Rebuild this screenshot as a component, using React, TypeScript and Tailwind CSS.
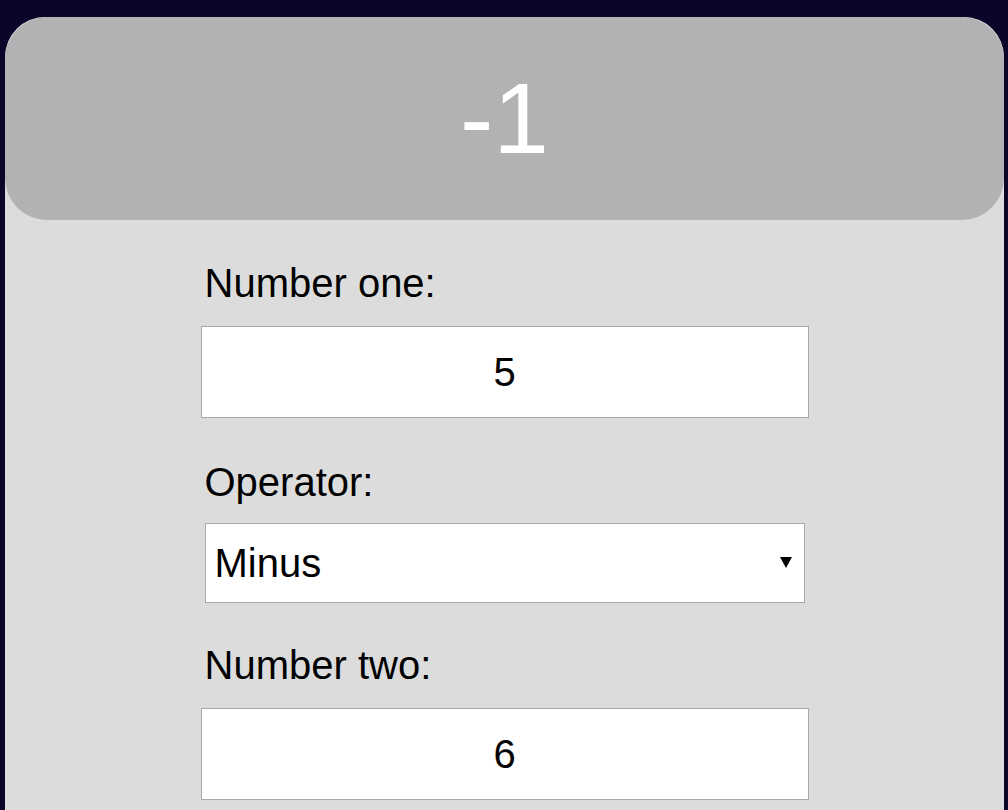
import { useState } from "react"

const ops: Record<string, (a: number, b: number) => number> = {
  Plus: (a, b) => a + b,
  Minus: (a, b) => a - b,
  Times: (a, b) => a * b,
  Divide: (a, b) => a / b,
}

export default function App() {
  const [one, setOne] = useState("5")
  const [two, setTwo] = useState("6")
  const [op, setOp] = useState("Minus")

  const result = ops[op](Number(one), Number(two))

  return (
    <div className="min-h-[810px] bg-[#0c0429] pt-[17px] font-['Liberation_Sans',Arial,sans-serif]">
      <div className="mx-[5px] mr-[4px] min-h-[793px] rounded-t-[40px] bg-[#dcdcdc]">
        {/* result */}
        <div className="rounded-[42px] bg-[#b3b1b3] pt-[44px] pb-[44px] text-center text-[100px] leading-[115px] text-white">
          {result}
        </div>

        <div className="mx-auto flex w-[600px] flex-col pt-[40px]">
          <label className="text-[40px] leading-[46px] text-black">Number one:</label>
          <input
            value={one}
            onChange={(e) => setOne(e.target.value)}
            className="mt-[20px] -mx-[4px] h-[92px] w-[608px] border border-[#a9a9a9] bg-white text-center text-[40px] text-black outline-none"
          />

          <label className="mt-[41px] text-[40px] leading-[46px] text-black">Operator:</label>
          <div className="relative mt-[18px] h-[80px] w-[600px]">
            <select
              value={op}
              onChange={(e) => setOp(e.target.value)}
              className="h-full w-full appearance-none border border-[#a9a9a9] bg-white pl-[9px] text-[40px] text-black outline-none"
            >
              {Object.keys(ops).map((k) => (
                <option key={k}>{k}</option>
              ))}
            </select>
            {/* dropdown arrow */}
            <svg className="pointer-events-none absolute right-[13px] top-[34px]" width="12" height="11" viewBox="0 0 12 11">
              <path d="M0 0H12L6 11Z" fill="#000" />
            </svg>
          </div>

          <label className="mt-[39px] text-[40px] leading-[46px] text-black">Number two:</label>
          <input
            value={two}
            onChange={(e) => setTwo(e.target.value)}
            className="mt-[20px] -mx-[4px] h-[92px] w-[608px] border border-[#a9a9a9] bg-white text-center text-[40px] text-black outline-none"
          />
        </div>
      </div>
    </div>
  )
}
